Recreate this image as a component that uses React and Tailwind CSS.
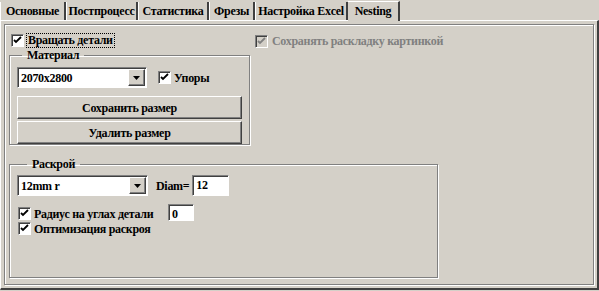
import React from 'react';

const Check = ({ checked = true, disabled = false }) => (
  <span className={`inline-flex w-[13px] h-[13px] shrink-0 items-center justify-center border-t border-l border-t-[#808080] border-l-[#808080] border-r border-b border-r-white border-b-white shadow-[inset_1px_1px_0_#404040] ${disabled ? 'bg-[#d4d0c8]' : 'bg-white'}`}>
    {checked && (
      <svg width="9" height="9" viewBox="0 0 9 9">
        <path d="M1 4 L3 6 L8 1" fill="none" stroke={disabled ? '#808080' : '#000'} strokeWidth="1.8" />
      </svg>
    )}
  </span>
);

const Combo = ({ value, width }) => (
  <div className={`flex h-[21px] ${width} bg-white border-t border-l border-t-[#808080] border-l-[#808080] border-r border-b border-r-white border-b-white shadow-[inset_1px_1px_0_#404040]`}>
    <span className="flex-1 pl-[3px] pt-[2px] leading-[16px]">{value}</span>
    <span className="flex w-[17px] h-[17px] mt-[1px] mr-[1px] items-center justify-center bg-[#d4d0c8] border-t border-l border-t-white border-l-white border-r border-b border-r-[#404040] border-b-[#404040] shadow-[inset_-1px_-1px_0_#808080]">
      <svg width="7" height="4" viewBox="0 0 7 4"><path d="M0 0 H7 L3.5 4 Z" fill="#000" /></svg>
    </span>
  </div>
);

const Field = ({ value, width }) => (
  <div className={`${width} bg-white border-t border-l border-t-[#808080] border-l-[#808080] border-r border-b border-r-white border-b-white shadow-[inset_1px_1px_0_#404040] pl-[3px] pt-[1px] leading-[16px]`}>
    {value}
  </div>
);

const Button = ({ children }) => (
  <button className="w-[225px] h-[23px] bg-[#d4d0c8] border-t border-l border-t-white border-l-white border-r border-b border-r-[#404040] border-b-[#404040] shadow-[inset_-1px_-1px_0_#808080] text-center leading-[20px]">
    {children}
  </button>
);

const tabs = [
  { label: 'Основные', w: 'w-[66px]' },
  { label: 'Постпроцесс', w: 'w-[72px]' },
  { label: 'Статистика', w: 'w-[71px]' },
  { label: 'Фрезы', w: 'w-[46px]' },
  { label: 'Настройка Excel', w: 'w-[93px]' },
];

export default function App() {
  return (
    <div className="w-[599px] h-[291px] bg-[#d4d0c8] text-black text-[12px] tracking-[-0.3px] font-bold overflow-hidden font-['Liberation_Serif','DejaVu_Serif',serif]">
      {/* Tabs */}
      <div className="flex h-[20px] items-end">
        {tabs.map((t) => (
          <div key={t.label} className={`${t.w} h-[18px] flex items-center justify-center whitespace-nowrap border-l border-l-white border-r-2 border-r-[#404040]`}>
            {t.label}
          </div>
        ))}
        <div className="w-[52px] h-[20px] flex items-center justify-center pb-[2px] border-t border-t-white border-r-2 border-r-[#404040] -mb-[1px] relative bg-[#d4d0c8]">
          Nesting
        </div>
      </div>

      {/* Panel */}
      <div className="h-[270px] border-t border-l border-t-white border-l-white border-r-2 border-b-2 border-r-[#404040] border-b-[#404040] p-[3px]">
        <div className="h-full border border-[#808080] shadow-[1px_1px_0_white,inset_1px_1px_0_white] pl-[4px] pt-[8px]">
          {/* Top row */}
          <div className="flex items-center h-[14px]">
            <div className="flex items-center gap-[3px] ml-[2px] w-[244px]">
              <Check />
              <span className="outline-1 outline-dotted outline-black px-[1px] leading-[13px]">Вращать детали</span>
            </div>
            <div className="flex items-center gap-[4px] text-[#808080] mt-[2px]">
              <Check disabled />
              <span>Сохранять раскладку картинкой</span>
            </div>
          </div>

          {/* Материал */}
          <fieldset className="w-[239px] h-[97px] mt-[1px] border border-[#808080] shadow-[1px_1px_0_white,inset_1px_1px_0_white] px-[7px] pt-[5px]">
            <legend className="ml-[5px] px-[5px] leading-[14px]">Материал</legend>
            <div className="flex items-center">
              <Combo value="2070x2800" width="w-[130px]" />
              <div className="flex items-center gap-[3px] ml-[11px]">
                <Check />
                <span>Упоры</span>
              </div>
            </div>
            <div className="flex flex-col gap-[2px] mt-[8px]">
              <Button>Сохранить размер</Button>
              <Button>Удалить размер</Button>
            </div>
          </fieldset>

          {/* Раскрой */}
          <fieldset className="w-[429px] h-[121px] mt-[12px] border border-[#808080] shadow-[1px_1px_0_white,inset_1px_1px_0_white] px-[7px] pt-[4px]">
            <legend className="ml-[10px] px-[5px] leading-[14px]">Раскрой</legend>
            <div className="flex items-center">
              <Combo value="12mm r" width="w-[131px]" />
              <span className="ml-[8px]">Diam=</span>
              <Field value="12" width="w-[37px] h-[21px] ml-[3px]" />
            </div>
            <div className="flex items-start mt-[8px] ml-[1px]">
              <div className="flex flex-col w-[150px] mt-[2px]">
                <div className="flex items-center gap-[3px] h-[15px]">
                  <Check />
                  <span>Радиус на углах детали</span>
                </div>
                <div className="flex items-center gap-[3px] h-[15px]">
                  <Check />
                  <span>Оптимизация раскроя</span>
                </div>
              </div>
              <Field value="0" width="w-[26px] h-[17px]" />
            </div>
          </fieldset>
        </div>
      </div>
    </div>
  );
}
